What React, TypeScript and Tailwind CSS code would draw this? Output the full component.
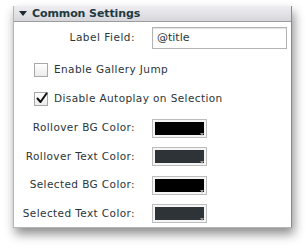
import React from 'react';

const colorRows = [
  { label: 'Rollover BG Color:', color: '#000000' },
  { label: 'Rollover Text Color:', color: '#2e3338' },
  { label: 'Selected BG Color:', color: '#000000' },
  { label: 'Selected Text Color:', color: '#2e3338' },
];

const Swatch = ({ color }: { color: string }) => (
  <div className="relative h-[19px] w-[55px] border border-[#bdbdbd] bg-[#f4f4f4] p-[2px]">
    <div className="h-full w-full" style={{ backgroundColor: color }} />
    <span className="absolute bottom-[1px] right-[2px] h-0 w-0 border-x-[2px] border-t-[3px] border-x-transparent border-t-[#9a9a9a]" />
  </div>
);

const Checkbox = ({ checked }: { checked?: boolean }) => (
  <div className="relative flex h-[14px] w-[14px] shrink-0 items-center justify-center border border-[#a8a8a8] bg-gradient-to-b from-[#ffffff] to-[#ececec]">
    {checked && (
      <svg width="12" height="12" viewBox="0 0 12 12" className="absolute -top-[1px] left-[1px]">
        <path d="M1.5 6.5 L4.5 10 L10.5 1.5" fill="none" stroke="#111" strokeWidth="2" strokeLinecap="round" strokeLinejoin="round" />
      </svg>
    )}
  </div>
);

export default function App() {
  return (
    <div className="h-[249px] w-[305px] bg-white pl-[13px] pt-[6px]" style={{ fontFamily: '"DejaVu Sans", Verdana, sans-serif' }}>
      <div className="h-[222px] w-[279px] border border-[#b5b5b5] border-r-[#8a8a8a] border-t-0 bg-white shadow-[2px_6px_10px_rgba(0,0,0,0.45)]">
        <div className="flex h-[16px] items-center gap-[5px] border-b border-[#9c9c9c] bg-gradient-to-b from-[#eeeef2] to-[#d6d6dc] pl-[5px]">
          <span className="h-0 w-0 border-x-[4px] border-t-[5px] border-x-transparent border-t-[#1c2b30]" />
          <span className="text-[11px] font-bold leading-none tracking-[-0.1px] text-[#213a3f]">Common Settings</span>
        </div>

        <div className="mt-[5px] flex items-center">
          <div className="w-[121px] whitespace-nowrap text-right text-[10.5px] tracking-[0.5px] text-[#2a363a]">Label Field:</div>
          <div className="ml-[17px] flex h-[22px] w-[135px] items-center border border-[#b3b3b3] pl-[4px] text-[11px] text-[#2a363a] shadow-[inset_0_1px_1px_rgba(0,0,0,0.12)]">
            @title
          </div>
        </div>

        <div className="mt-[13px] flex items-center gap-[6px] pl-[20px]">
          <Checkbox />
          <span className="whitespace-nowrap text-[10.5px] tracking-[0.4px] text-[#2a363a]">Enable Gallery Jump</span>
        </div>
        <div className="mt-[13px] flex items-center gap-[6px] pl-[20px]">
          <Checkbox checked />
          <span className="whitespace-nowrap text-[10.5px] tracking-[0.4px] text-[#2a363a]">Disable Autoplay on Selection</span>
        </div>

        <div className="mt-[12px] flex flex-col gap-[9.5px]">
          {colorRows.map((row) => (
            <div key={row.label} className="flex items-center">
              <div className="w-[121px] whitespace-nowrap text-right text-[10.5px] tracking-[0.4px] text-[#2a363a]">{row.label}</div>
              <div className="ml-[17px]">
                <Swatch color={row.color} />
              </div>
            </div>
          ))}
        </div>
      </div>
    </div>
  );
}
